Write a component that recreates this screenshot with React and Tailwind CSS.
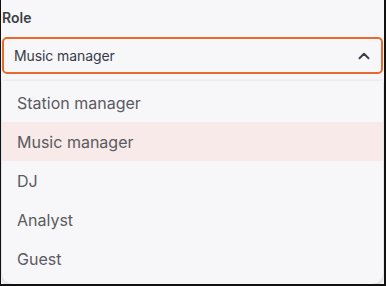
import { ChevronUp } from "lucide-react";

const options = ["Station manager", "Music manager", "DJ", "Analyst", "Guest"];

export default function App() {
  const selected = "Music manager";

  return (
    <div
      className="w-[386px] h-[286px] bg-[#f7f7f9] border-l border-r-2 border-b-2 border-[#111] overflow-hidden"
      style={{ fontFamily: "Inter, 'Noto Sans', sans-serif" }}
    >
      <div className="pl-[1px] pr-[1px] pt-[9px]">
        <div className="text-[14px] font-semibold text-[#3d3f47] leading-[18px]">Role</div>
        <div className="mt-[10px] h-[37px] flex items-center justify-between pl-[10px] pr-[8px] border-2 border-[#e8692c] rounded-[5px] bg-[#f7f7f9]">
          <span className="text-[14px] text-[#373b47] tracking-[-0.1px]">{selected}</span>
          <ChevronUp className="w-[18px] h-[18px] text-[#3a3d45]" strokeWidth={2.5} />
        </div>
        <div className="mt-[7px] h-[203px] rounded-b-[10px] bg-[#f7f7f9] shadow-[0_1px_4px_rgba(0,0,0,0.18)] pt-[2px]">
          {options.map((o) => (
            <div
              key={o}
              className={`h-[39px] flex items-center px-[15px] text-[16px] text-[#5a5a60] ${
                o === selected ? "bg-[#f7eae9]" : ""
              }`}
            >
              {o}
            </div>
          ))}
        </div>
      </div>
    </div>
  );
}
